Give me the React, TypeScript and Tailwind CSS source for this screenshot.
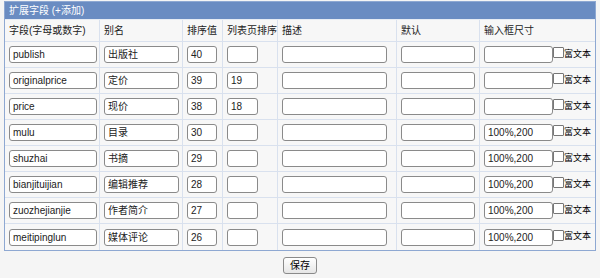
import React from "react";

const rows = [
  ["publish", "出版社", "40", "", ""],
  ["originalprice", "定价", "39", "19", ""],
  ["price", "现价", "38", "18", ""],
  ["mulu", "目录", "30", "", "100%,200"],
  ["shuzhai", "书摘", "29", "", "100%,200"],
  ["bianjituijian", "编辑推荐", "28", "", "100%,200"],
  ["zuozhejianjie", "作者简介", "27", "", "100%,200"],
  ["meitipinglun", "媒体评论", "26", "", "100%,200"],
];

const font = { fontFamily: '"Liberation Sans", "Noto Sans CJK SC", sans-serif' };

function Inp({ v, w }: { v: string; w: string }) {
  return (
    <div
      className={`${w} h-[17px] shrink-0 border border-[#8a8a8a] rounded-[3px] bg-white text-[10px] leading-[15px] pl-[3px] text-[#222] overflow-hidden whitespace-nowrap`}
    >
      {v}
    </div>
  );
}

const cols = "grid grid-cols-[95px_83px_40px_55px_119px_83px_115px]";
const cell = "border-r border-[#d9e1ee] last:border-r-0 flex items-center pl-[4px] whitespace-nowrap";

export default function App() {
  return (
    <div className="w-[600px] h-[278px] bg-[#f5f5f5] text-[10px] text-[#222] pt-[1px]" style={font}>
      <div className="ml-[4px] w-[592px] border border-[#8ea8d2] bg-[#f7f7f7]">
        <div className="h-[18px] bg-[#6a8cc2] text-white text-[10px] leading-[18px] pl-[4px] border-b border-[#e6ebf3]">
          扩展字段 (+添加)
        </div>
        <div className={`${cols} h-[22px] border-b border-[#d9e1ee]`}>
          {["字段(字母或数字)", "别名", "排序值", "列表页排序", "描述", "默认", "输入框尺寸"].map((t) => (
            <div key={t} className={cell}>
              {t}
            </div>
          ))}
        </div>
        {rows.map((r, i) => (
          <div key={i} className={`${cols} h-[26px] border-b border-[#d9e1ee] last:border-b-0`}>
            <div className={cell}>
              <Inp v={r[0]} w="w-[88px]" />
            </div>
            <div className={cell}>
              <Inp v={r[1]} w="w-[75px]" />
            </div>
            <div className={cell}>
              <Inp v={r[2]} w="w-[30px]" />
            </div>
            <div className={cell}>
              <Inp v={r[3]} w="w-[31px]" />
            </div>
            <div className={cell}>
              <Inp v="" w="w-[105px]" />
            </div>
            <div className={cell}>
              <Inp v="" w="w-[74px]" />
            </div>
            <div className={cell}>
              <Inp v={r[4]} w="w-[69px]" />
              <div className="w-[11px] h-[11px] shrink-0 border border-[#777] bg-white mb-[4px] rounded-[1px]" />
              <span className="text-[9px] text-black">富文本</span>
            </div>
          </div>
        ))}
      </div>
      <div className="flex justify-center mt-[6px]">
        <button className="h-[17px] px-[6px] border border-[#8a8a8a] rounded-[3px] bg-gradient-to-b from-white to-[#e6e6e6] text-[10px] leading-[14px] text-black" style={font}>
          保存
        </button>
      </div>
    </div>
  );
}
